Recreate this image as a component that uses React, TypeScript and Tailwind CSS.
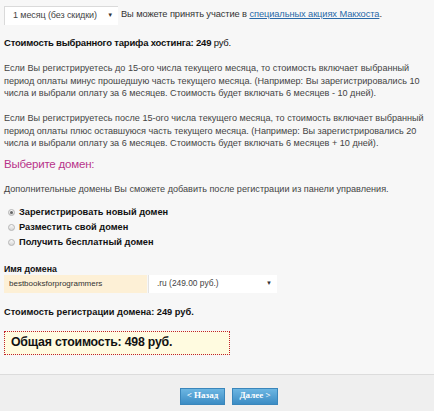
import React, { useState } from 'react';

const font = { fontFamily: '"Liberation Sans", Arial, sans-serif' };

export default function App() {
  const [domainMode, setDomainMode] = useState('new');
  const [domain, setDomain] = useState('bestbooksforprogrammers');

  const options = [
    { id: 'new', label: 'Зарегистрировать новый домен' },
    { id: 'own', label: 'Разместить свой домен' },
    { id: 'free', label: 'Получить бесплатный домен' },
  ];

  return (
    <div className="w-[434px] h-[411px] bg-[#f7f7f7] text-[#222] overflow-hidden whitespace-nowrap" style={font}>
      <div className="px-[4px] pt-[5px]">
        {/* tariff period */}
        <div className="flex items-center h-[20px]">
          <div className="w-[114px] h-[19px] bg-white border-l border-t border-[#dadada] flex items-center justify-between pl-[8px] pr-[5px] text-[9px] tracking-[-0.1px] text-[#444]">
            <span>1 месяц (без скидки)</span>
            <span className="text-[6px] text-[#333]">▼</span>
          </div>
          <span className="ml-[3px] text-[9.3px] tracking-[-0.1px] text-[#333]">
            Вы можете принять участие в{' '}
            <a href="#" className="text-[#2a6aa8] underline">специальных акциях Макхоста</a>.
          </span>
        </div>

        <p className="mt-[12px] text-[9.5px] leading-[12px] tracking-[-0.2px] text-[#111]">
          <b>Стоимость выбранного тарифа хостинга: 249</b> руб.
        </p>

        <p className="mt-[13px] text-[9.1px] leading-[12.5px] text-[#444]">
          Если Вы регистрируетесь до 15-ого числа текущего месяца, то стоимость включает выбранный<br />
          период оплаты минус прошедшую часть текущего месяца. (Например: Вы зарегистрировались 10<br />
          числа и выбрали оплату за 6 месяцев. Стоимость будет включать 6 месяцев - 10 дней).
        </p>

        <p className="mt-[12.5px] text-[9.1px] leading-[12.5px] text-[#444]">
          Если Вы регистрируетесь после 15-ого числа текущего месяца, то стоимость включает выбранный<br />
          период оплаты плюс оставшуюся часть текущего месяца. (Например: Вы зарегистрировались 20<br />
          числа и выбрали оплату за 6 месяцев. Стоимость будет включать 6 месяцев + 10 дней).
        </p>

        <h2 className="mt-[6px] text-[11.5px] leading-[16px] tracking-[-0.2px] text-[#b8338a]">Выберите домен:</h2>

        <p className="mt-[11px] text-[9.1px] leading-[12px] text-[#444]">
          Дополнительные домены Вы сможете добавить после регистрации из панели управления.
        </p>

        <div className="mt-[10.5px] flex flex-col">
          {options.map((o) => (
            <label key={o.id} className="flex items-center h-[15px] text-[9.25px] font-bold text-[#111] cursor-pointer">
              <span className="ml-[4px] w-[7px] h-[7px] rounded-full border border-[#b5b5b5] bg-gradient-to-b from-[#fafafa] to-[#d6d6d6] flex items-center justify-center">
                {domainMode === o.id && <span className="w-[3px] h-[3px] rounded-full bg-[#666]" />}
              </span>
              <input type="radio" className="hidden" checked={domainMode === o.id} onChange={() => setDomainMode(o.id)} />
              <span className="ml-[4px]">{o.label}</span>
            </label>
          ))}
        </div>

        <p className="mt-[12.5px] text-[8.8px] font-bold text-[#111] leading-[12px]">Имя домена</p>
        <div className="flex">
          <input
            value={domain}
            onChange={(e) => setDomain(e.target.value)}
            className="w-[143px] h-[18px] bg-[#fdf0d6] border-0 outline-none pl-[5px] text-[8px] text-[#333]"
            style={font}
          />
          <div className="ml-[1px] w-[129px] h-[18px] bg-white border-l border-[#e3e3e3] flex items-center justify-between pl-[8px] pr-[5px] text-[8.4px] text-[#444]">
            <span>.ru (249.00 руб.)</span>
            <span className="text-[6px] text-[#333]">▼</span>
          </div>
        </div>

        <p className="mt-[13px] text-[9.25px] leading-[12px] font-bold text-[#111]">Стоимость регистрации домена: 249 руб.</p>

        <div className="mt-[13px] w-[226px] h-[24px] bg-[#fffbe0] border border-dotted border-[#c0202a] flex items-center pl-[6px]">
          <span className="text-[12.3px] font-bold tracking-[-0.2px] text-[#111]">Общая стоимость: 498 руб.</span>
        </div>
      </div>

      <div className="mt-[19px] border-t border-[#dcdcdc] bg-[#efefef] h-[60px] flex justify-center pl-[24px] pt-[13px] gap-[7px]">
        <button className="w-[45px] h-[17px] bg-gradient-to-b from-[#6cb6e2] to-[#3b8cc4] text-white text-[9px] font-bold border border-[#3a86bb]" style={{ fontFamily: '"Liberation Serif", serif' }}>
          &lt; Назад
        </button>
        <button className="w-[46px] h-[17px] bg-gradient-to-b from-[#6cb6e2] to-[#3b8cc4] text-white text-[9px] font-bold border border-[#3a86bb]" style={{ fontFamily: '"Liberation Serif", serif' }}>
          Далее &gt;
        </button>
      </div>
    </div>
  );
}
